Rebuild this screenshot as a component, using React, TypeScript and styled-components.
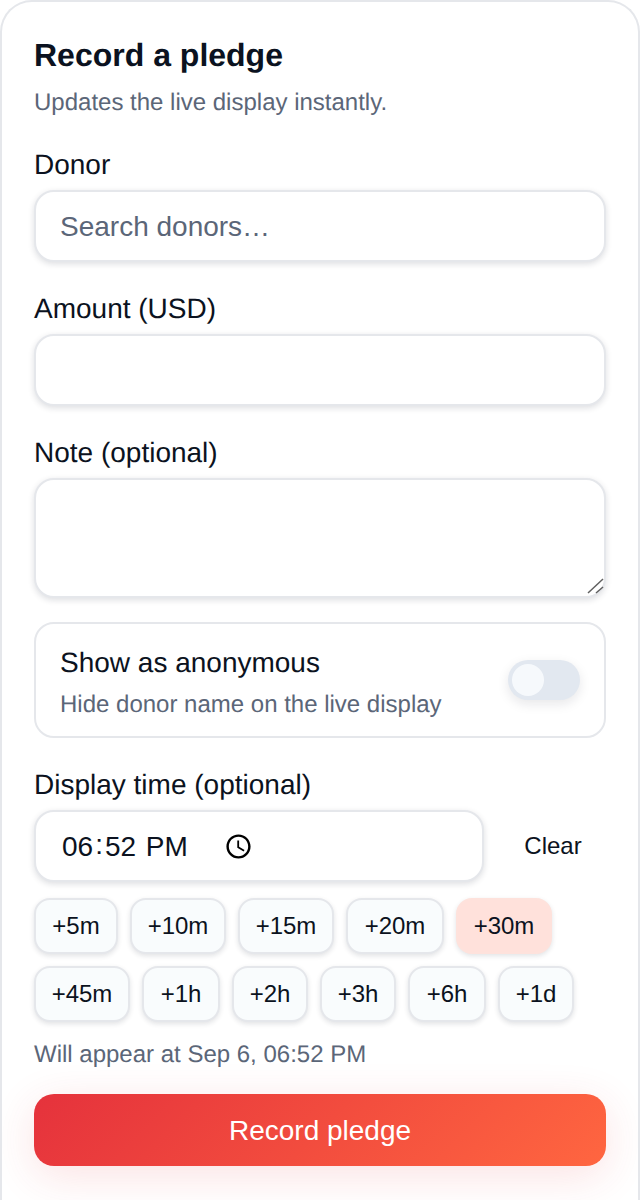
import React from "react";
import styled, { createGlobalStyle } from "styled-components";

const Global = createGlobalStyle`
  html, body { margin: 0; padding: 0; background: #ffffff; }
  body {
    font-family: "Liberation Sans", Arial, sans-serif;
    color: #0b1220;
    overflow: hidden;
    text-rendering: geometricPrecision;
  }
  * { box-sizing: border-box; }
`;

const Card = styled.form`
  width: 640px;
  height: 1200px;
  background: #fff;
  border: 2px solid #e5e7eb;
  border-bottom: none;
  border-radius: 32px 32px 0 0;
  padding: 32px 32px 0;
  display: flex;
  flex-direction: column;
  overflow: hidden;
`;

const Title = styled.h2`
  margin: 0;
  font-size: 32px;
  line-height: 42px;
  font-weight: 700;
  color: #0b1220;
`;

const Subtitle = styled.p`
  margin: 9px 0 0;
  font-size: 24px;
  line-height: 36px;
  color: #5b6678;
`;

const Label = styled.label<{ $top: number }>`
  display: block;
  margin: ${(p) => p.$top}px 0 7px;
  font-size: 28px;
  line-height: 36px;
  color: #0b1220;
`;

const fieldCss = `
  display: block;
  width: 100%;
  border: 2px solid #e5e7eb;
  border-radius: 20px;
  background: #fff;
  box-shadow: 0 2px 6px rgba(15, 23, 42, 0.14);
  font-family: "Liberation Sans", Arial, sans-serif;
  font-size: 28px;
  color: #0b1220;
  outline: none;
`;

const TextInput = styled.input`
  ${fieldCss}
  height: 72px;
  padding: 2px 24px 0;
  &::placeholder { color: #5b6678; opacity: 1; }
`;

const NoteWrap = styled.div`
  position: relative;
  height: 120px;
`;

const NoteArea = styled.textarea`
  ${fieldCss}
  height: 120px;
  padding: 16px 24px;
  resize: none;
`;

const Grip = styled.svg`
  position: absolute;
  right: 2px;
  bottom: 2px;
  width: 18px;
  height: 18px;
  pointer-events: none;
`;

const ToggleCard = styled.div`
  margin-top: 24px;
  height: 116px;
  border: 2px solid #e5e7eb;
  border-radius: 20px;
  padding: 0 24px;
  display: flex;
  align-items: center;
  justify-content: space-between;
`;

const ToggleText = styled.div`
  display: flex;
  flex-direction: column;
  gap: 8px;
  padding-top: 6px;
`;

const ToggleTitle = styled.div`
  font-size: 28px;
  line-height: 36px;
  color: #0b1220;
`;

const ToggleHint = styled.div`
  font-size: 24px;
  line-height: 32px;
  color: #5b6678;
`;

const Switch = styled.span`
  width: 72px;
  height: 40px;
  border-radius: 20px;
  background: #e2e8f0;
  padding: 4px;
  box-shadow: 0 4px 12px rgba(15, 23, 42, 0.1);
  display: flex;
  align-items: center;
`;

const Knob = styled.span`
  width: 32px;
  height: 32px;
  border-radius: 50%;
  background: #f6f9fc;
`;

const TimeRow = styled.div`
  display: flex;
  align-items: center;
  gap: 16px;
`;

const TimeInput = styled.input`
  ${fieldCss}
  flex: 1;
  min-width: 0;
  height: 72px;
  padding: 2px 24px 0;
  &::-webkit-datetime-edit {
    flex: none;
    width: 132px;
    overflow: visible;
  }
  &::-webkit-datetime-edit-fields-wrapper { display: flex; }
  &::-webkit-datetime-edit-hour-field,
  &::-webkit-datetime-edit-minute-field,
  &::-webkit-datetime-edit-ampm-field { padding: 2px; }
  &::-webkit-calendar-picker-indicator {
    margin-left: 37px;
    margin-right: auto;
  }
`;

const ClearButton = styled.button`
  width: 106px;
  height: 72px;
  border: none;
  background: transparent;
  font-family: inherit;
  font-size: 24px;
  color: #0b1220;
  padding: 0;
`;

const Chips = styled.div`
  margin-top: 16px;
  display: flex;
  flex-wrap: wrap;
  gap: 12px;
`;

const Chip = styled.button<{ $active?: boolean; $width: number }>`
  width: ${(p) => p.$width}px;
  height: 56px;
  padding: 0;
  border: 2px solid ${(p) => (p.$active ? "#fee2dc" : "#e5e7eb")};
  border-radius: 16px;
  background: ${(p) => (p.$active ? "#ffe1db" : "#f9fcfd")};
  box-shadow: 0 2px 5px rgba(15, 23, 42, 0.12);
  font-family: inherit;
  font-size: 24px;
  color: #0b1220;
`;

const Hint = styled.p`
  margin: 17px 0 0;
  font-size: 24px;
  line-height: 32px;
  color: #5b6678;
`;

const Submit = styled.button`
  margin-top: 23px;
  flex: none;
  height: 72px;
  width: 100%;
  border: none;
  border-radius: 20px;
  padding: 2px 0 0;
  background: linear-gradient(135deg, #e5323c 0%, #ff6640 100%);
  box-shadow: 0 10px 44px rgba(229, 50, 60, 0.14);
  color: #fff;
  font-family: inherit;
  font-size: 28px;
`;

const chips: [string, number][] = [
  ["+5m", 84],
  ["+10m", 96],
  ["+15m", 96],
  ["+20m", 98],
  ["+30m", 96],
  ["+45m", 96],
  ["+1h", 78],
  ["+2h", 76],
  ["+3h", 76],
  ["+6h", 78],
  ["+1d", 76],
];

export default function App() {
  return (
    <>
      <Global />
      <Card onSubmit={(e) => e.preventDefault()}>
        <Title>Record a pledge</Title>
        <Subtitle>Updates the live display instantly.</Subtitle>
        <Label $top={26}>Donor</Label>
        <TextInput placeholder="Search donors…" />
        <Label $top={29}>Amount (USD)</Label>
        <TextInput />
        <Label $top={29}>Note (optional)</Label>
        <NoteWrap>
          <NoteArea />
          <Grip viewBox="0 0 18 18" fill="none" stroke="#606060" strokeWidth="1.5">
            <path d="M2 15 L17 1" />
            <path d="M10 15 L17 9" />
          </Grip>
        </NoteWrap>
        <ToggleCard>
          <ToggleText>
            <ToggleTitle>Show as anonymous</ToggleTitle>
            <ToggleHint>Hide donor name on the live display</ToggleHint>
          </ToggleText>
          <Switch>
            <Knob />
          </Switch>
        </ToggleCard>
        <Label $top={29}>Display time (optional)</Label>
        <TimeRow>
          <TimeInput type="time" defaultValue="18:52" />
          <ClearButton type="button">Clear</ClearButton>
        </TimeRow>
        <Chips>
          {chips.map(([label, width]) => (
            <Chip key={label} type="button" $width={width} $active={label === "+30m"}>
              {label}
            </Chip>
          ))}
        </Chips>
        <Hint>Will appear at Sep 6, 06:52 PM</Hint>
        <Submit type="submit">Record pledge</Submit>
      </Card>
    </>
  );
}
